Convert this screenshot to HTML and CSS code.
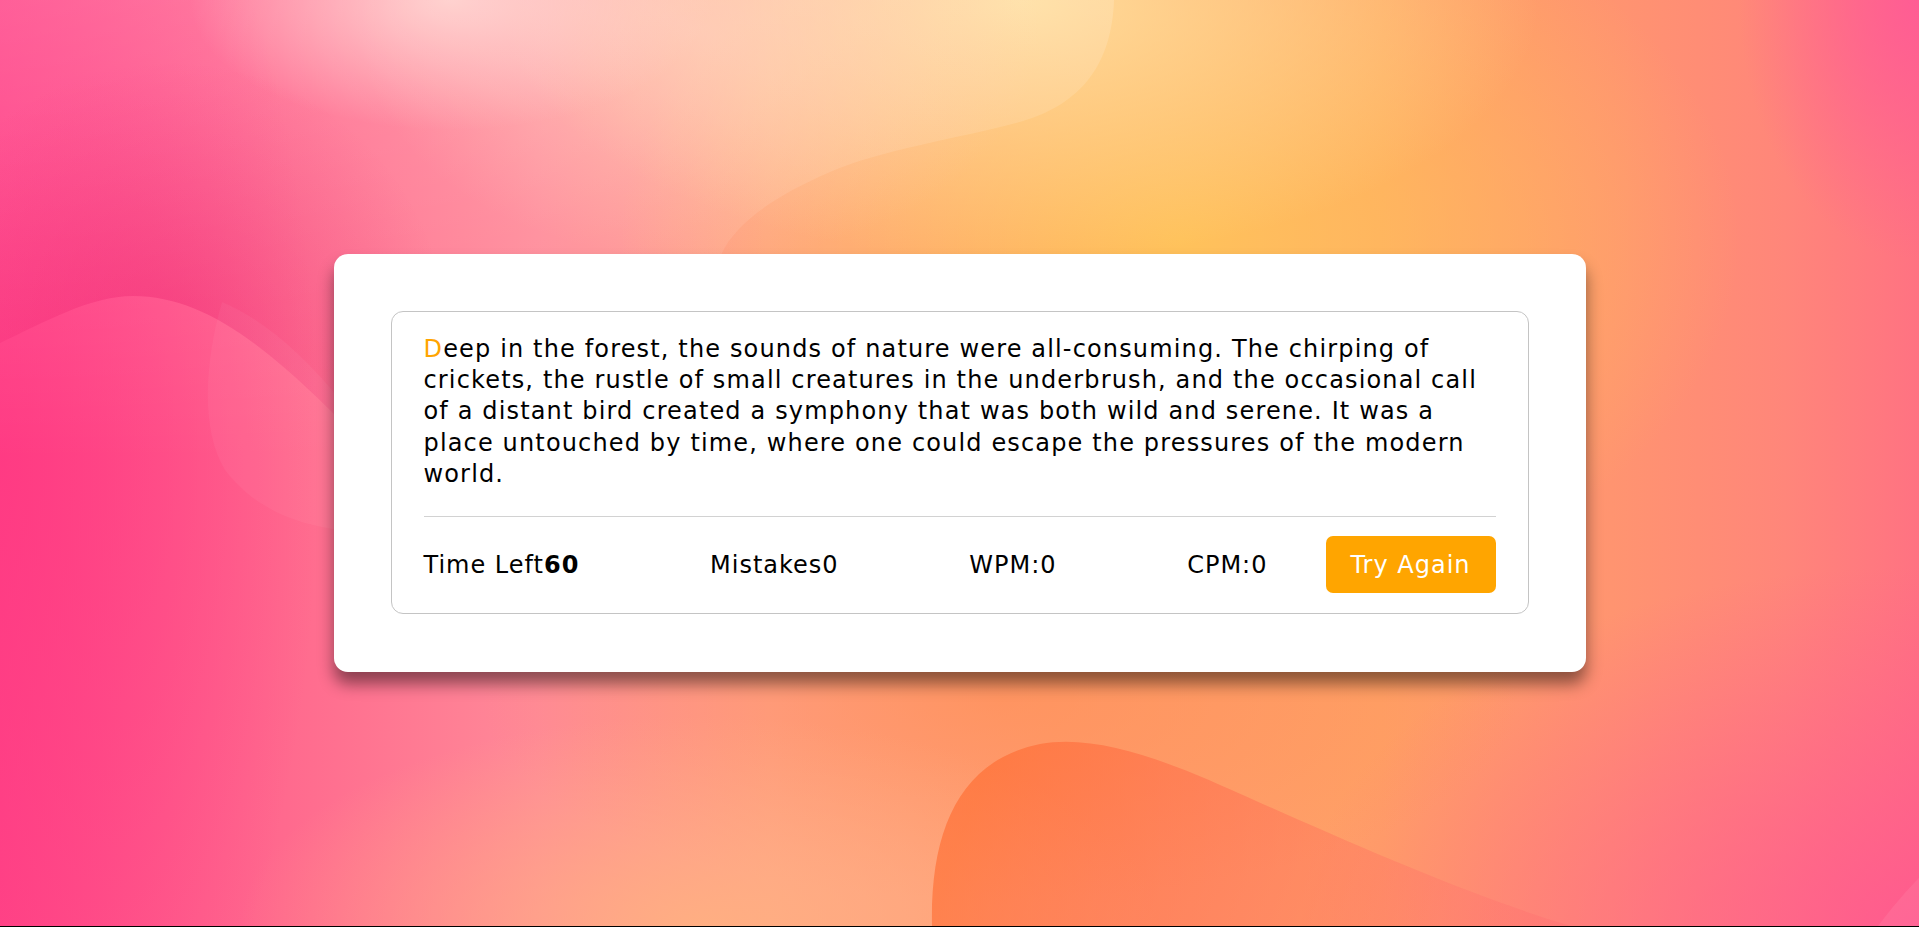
FILE: index.html
```html
<!DOCTYPE html>
<html lang="en">
<head>
<meta charset="utf-8">
<title>Typing Speed Test</title>
<link rel="stylesheet" href="styles.css">
</head>
<body>
  <main class="wrapper">
    <div class="content-box">
      <p class="typing-text"><span class="active">D</span>eep in the forest, the sounds of nature were all-consuming. The chirping of crickets, the rustle of small creatures in the underbrush, and the occasional call of a distant bird created a symphony that was both wild and serene. It was a place untouched by time, where one could escape the pressures of the modern world.</p>
      <div class="content">
        <ul class="result-details">
          <li class="time">Time Left<b>60</b></li>
          <li class="mistake">Mistakes<span>0</span></li>
          <li class="wpm">WPM:<span>0</span></li>
          <li class="cpm">CPM:<span>0</span></li>
        </ul>
        <button class="retry">Try Again</button>
      </div>
    </div>
  </main>
</body>
</html>
```
FILE: styles.css
```css
* {
  box-sizing: border-box;
}

html {
  background: #000;
}

body {
  margin: 0;
  height: calc(100vh - 1px);
  display: flex;
  align-items: center;
  justify-content: center;
  font-family: "DejaVu Sans", "Liberation Sans", sans-serif;
  color: #000;
  background:
    url("data:image/svg+xml,<svg xmlns='http://www.w3.org/2000/svg' viewBox='0 0 1919 926' preserveAspectRatio='none'><defs><linearGradient id='a' gradientUnits='userSpaceOnUse' x1='0' y1='0' x2='0' y2='460'><stop offset='0' stop-color='white' stop-opacity='0.16'/><stop offset='1' stop-color='white' stop-opacity='0'/></linearGradient><radialGradient id='b' gradientUnits='userSpaceOnUse' cx='170' cy='340' r='280'><stop offset='0' stop-color='rgb(225,10,95)' stop-opacity='0.3'/><stop offset='1' stop-color='rgb(225,10,95)' stop-opacity='0'/></radialGradient><linearGradient id='c' gradientUnits='userSpaceOnUse' x1='1000' y1='740' x2='1450' y2='926'><stop offset='0' stop-color='rgb(255,105,45)' stop-opacity='0.6'/><stop offset='1' stop-color='rgb(255,80,100)' stop-opacity='0.15'/></linearGradient></defs><path d='M0,0 L1114,0 C1112,60 1085,105 1016,123 C960,138 880,150 830,172 C770,198 735,225 722,253 L690,460 L0,460 Z' fill='url(%23a)'/><path d='M0,0 L0,343 C45,322 90,296 133,296 C200,296 260,340 340,420 L420,500 L520,0 Z' fill='url(%23b)'/><path d='M222,302 C205,360 200,430 225,470 C255,510 300,525 340,530 L340,400 C300,350 260,318 222,302 Z' fill='white' fill-opacity='0.045'/><path d='M932,926 C930,830 960,760 1040,744 C1090,735 1150,755 1209,780 C1300,820 1450,890 1571,926 Z' fill='url(%23c)'/><circle cx='2250' cy='1200' r='462' fill='white' fill-opacity='0.07'/></svg>") 0 0 / 100% 100% no-repeat,
    radial-gradient(ellipse 260px 130px at 450px 0px, rgba(255, 212, 206, 0.85), rgba(255, 212, 206, 0)),
    radial-gradient(ellipse 340px 230px at 700px 30px, rgba(255, 205, 182, 0.6), rgba(255, 205, 182, 0)),
    radial-gradient(ellipse 520px 260px at 1020px 0px, rgba(255, 226, 160, 0.9), rgba(255, 226, 160, 0)),
    radial-gradient(ellipse 560px 380px at 1180px 240px, rgba(255, 196, 90, 0.95), rgba(255, 196, 90, 0)),
    radial-gradient(ellipse 180px 260px at 1919px 0px, rgba(255, 90, 150, 0.9), rgba(255, 90, 150, 0)),
    radial-gradient(ellipse 620px 360px at 1919px 926px, rgba(255, 85, 145, 0.8), rgba(255, 85, 145, 0)),
    radial-gradient(ellipse 320px 760px at 0px 460px, rgba(255, 55, 130, 0.75), rgba(255, 55, 130, 0)),
    radial-gradient(ellipse 460px 210px at 700px 926px, rgba(255, 178, 128, 0.85), rgba(255, 178, 128, 0)),
    radial-gradient(ellipse 520px 200px at 1000px 700px, rgba(255, 140, 80, 0.55), rgba(255, 140, 80, 0)),
    linear-gradient(90deg, #ff4587 0%, #ff6a8e 15%, #ff8a98 28%, #ffa08a 40%, #ff9e72 55%, #ffa066 72%, #ff9470 84%, #ff867a 93%, #ff7282 100%);
}

.wrapper {
  width: 1252px;
  padding: 57px 57px 58px;
  background: #fff;
  border-radius: 14px;
  box-shadow: 0 12px 16px rgba(0, 0, 0, 0.45);
}

.content-box {
  border: 1px solid #c4c4c4;
  border-radius: 12px;
  padding: 22px 32px 0;
}

.typing-text {
  margin: 0;
  font-size: 24px;
  line-height: 31.2px;
  letter-spacing: 1.15px;
}

.typing-text .active {
  color: #ffa500;
}

.content {
  margin-top: 26px;
  border-top: 1px solid #d2d2d2;
  padding: 19px 0 20px;
  display: flex;
  align-items: center;
}

.result-details {
  list-style: none;
  margin: 0 58px 0 0;
  padding: 0;
  flex: 1;
  display: flex;
  justify-content: space-between;
  align-items: center;
}

.result-details li {
  font-size: 24px;
  letter-spacing: 1px;
}

.result-details b {
  font-weight: 700;
}

.retry {
  width: 170px;
  height: 57px;
  border: none;
  border-radius: 7px;
  background: #ffa500;
  color: #fff;
  font-family: "DejaVu Sans", "Liberation Sans", sans-serif;
  font-size: 24px;
  letter-spacing: 1px;
  padding: 0;
  cursor: pointer;
}
```
